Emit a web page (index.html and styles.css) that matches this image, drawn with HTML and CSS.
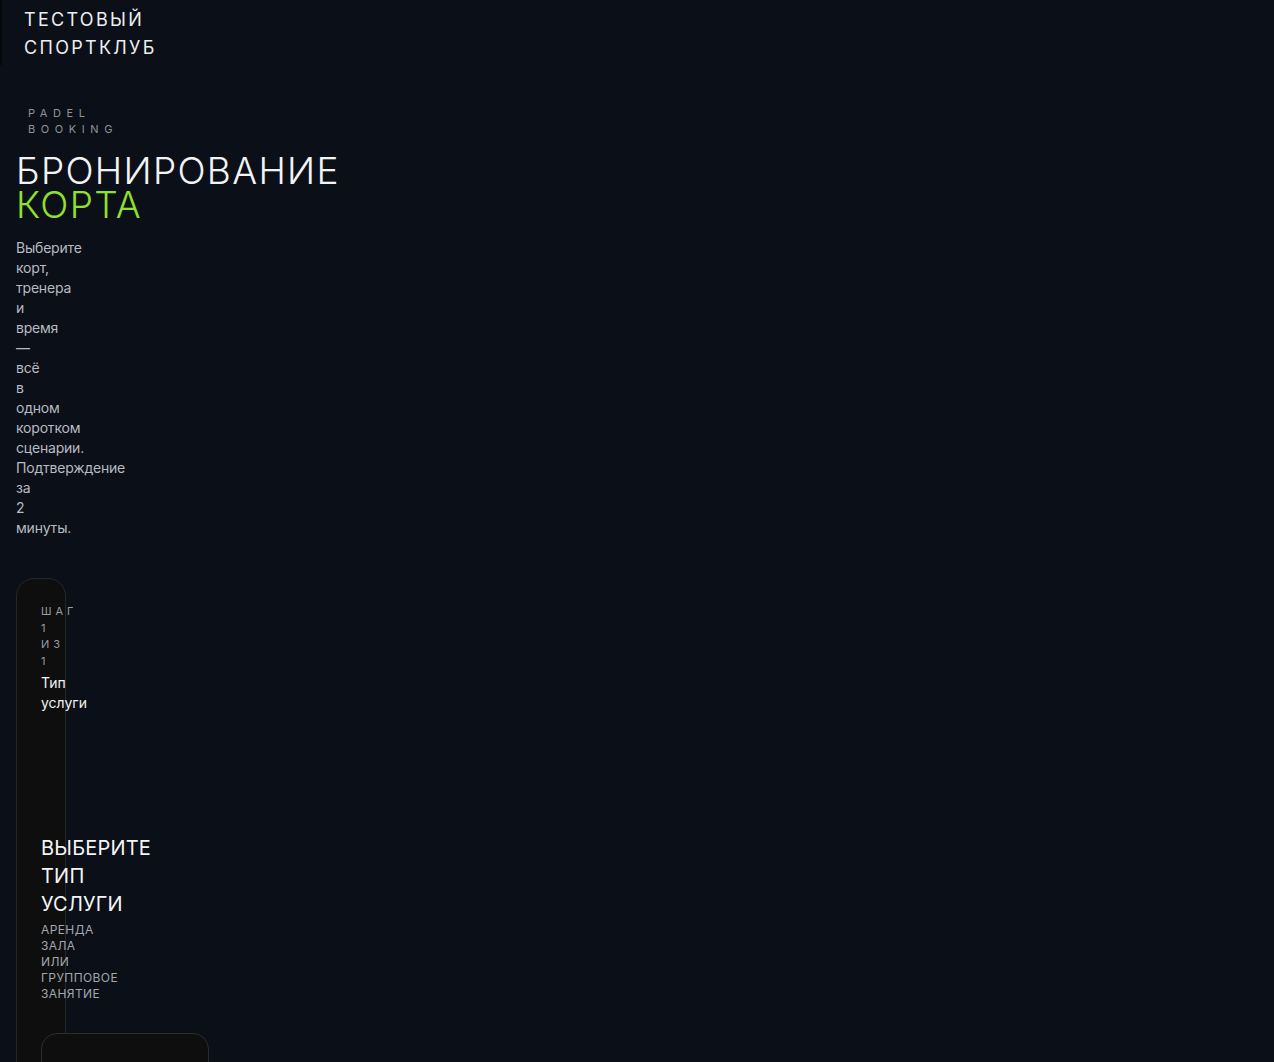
FILE: index.html
```html
<!DOCTYPE html>
<html lang="ru">
<head>
<meta charset="utf-8">
<title>Тестовый спортклуб — бронирование корта</title>
<link rel="stylesheet" href="styles.css">
</head>
<body>
<header class="topbar">
  <div class="brand">Тестовый спортклуб</div>
</header>
<main class="page">
  <section class="hero">
    <div class="eyebrow">Padel booking</div>
    <h1 class="title">Бронирование <span class="accent">корта</span></h1>
    <p class="lead">Выберите корт, тренера и время — всё в одном коротком сценарии. Подтверждение за 2 минуты.</p>
  </section>
  <section class="card">
    <div class="step-meta">
      <div class="step-count">Шаг 1 из 1</div>
      <div class="step-name">Тип услуги</div>
    </div>
    <div class="step-head">
      <h2 class="step-title">Выберите тип услуги</h2>
      <div class="step-sub">Аренда зала или групповое занятие</div>
    </div>
    <div class="option"></div>
  </section>
</main>
</body>
</html>
```
FILE: styles.css
```css
* { box-sizing: border-box; }
html, body { margin: 0; padding: 0; }
body {
  background: #0b0f17;
  color: #f2f3f5;
  font-family: Inter, "Noto Sans", "Liberation Sans", sans-serif;
  min-height: 1062px;
  overflow: hidden;
}
.topbar {
  height: 65px;
  padding: 6px 24px 3px;
  border-left: 2px solid #05070b;
}
.brand {
  width: 0;
  font-size: 18px;
  line-height: 28px;
  letter-spacing: 2.3px;
  text-transform: uppercase;
  font-weight: 400;
  color: #eceef1;
  margin-left: -2px;
}
.page {
  padding: 40px 16px 0;
}
.hero {
  width: 0;
}
.eyebrow {
  padding: 0 12px;
  width: 24px;
  font-size: 11px;
  line-height: 16px;
  letter-spacing: 5.6px;
  text-transform: uppercase;
  color: #8e939b;
}
.title {
  margin: 17px 0 0;
  font-size: 37px;
  font-weight: 300;
  line-height: 34px;
  letter-spacing: 1.3px;
  text-transform: uppercase;
  color: #f2f3f5;
}
.accent { color: #8fe02f; }
.lead {
  margin: 16px 0 0;
  font-size: 14px;
  line-height: 20px;
  letter-spacing: -0.2px;
  color: #b7bbc2;
}
.card {
  margin-top: 40px;
  width: 50px;
  padding: 24px;
  background: #0e0e0f;
  border: 1px solid #262729;
  border-radius: 18px;
  min-height: 600px;
}
.step-count {
  font-size: 11px;
  line-height: 16.5px;
  letter-spacing: 4px;
  text-transform: uppercase;
  color: #989ca3;
}
.step-name {
  margin-top: 4px;
  font-size: 14px;
  line-height: 20px;
  color: #f2f3f5;
}
.step-head {
  margin-top: 121px;
}
.step-title {
  margin: 0;
  font-size: 20px;
  font-weight: 400;
  line-height: 28px;
  letter-spacing: 0.2px;
  text-transform: uppercase;
  color: #f4f5f7;
}
.step-sub {
  margin-top: 4px;
  font-size: 12px;
  line-height: 16px;
  letter-spacing: 0.4px;
  text-transform: uppercase;
  color: #a2a6ad;
}
.option {
  margin-top: 31px;
  width: 168px;
  height: 120px;
  background: #0e0e0f;
  border: 1px solid #2a2b2d;
  border-radius: 16px;
}
```
